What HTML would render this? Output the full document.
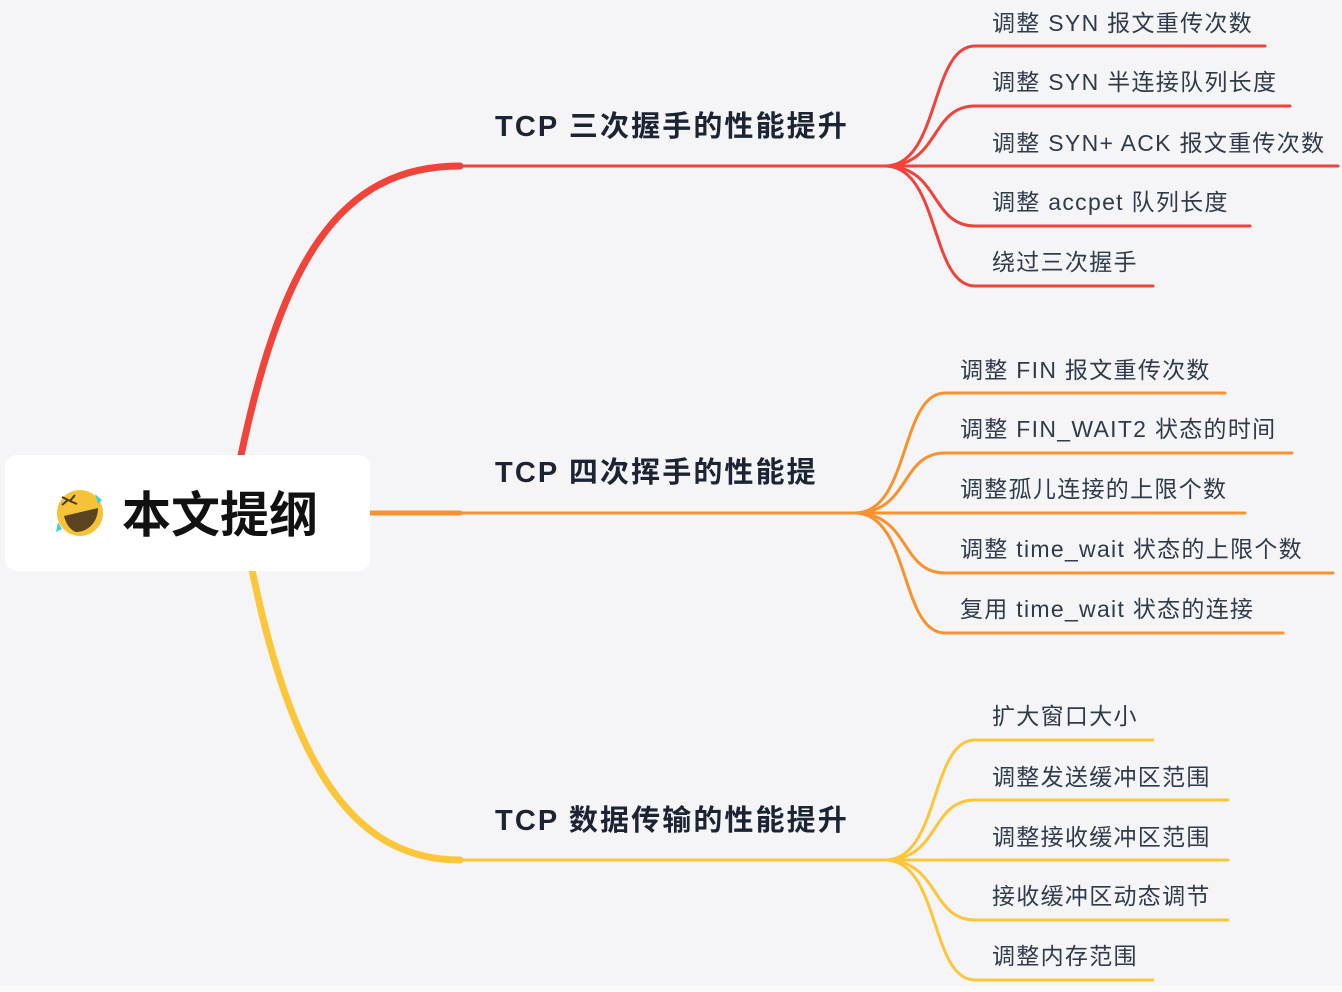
<!DOCTYPE html>
<html><head><meta charset="utf-8"><style>
html,body{margin:0;padding:0;background:#f5f5f8;}
svg{display:block;}
text{font-family:"Liberation Sans","Noto Sans CJK SC",sans-serif;}
.t{font-size:23px;fill:#2f3a4a;letter-spacing:1.3px;}
.h{font-size:29px;font-weight:bold;fill:#1c2433;letter-spacing:2.1px;}
</style></head><body>
<svg width="1342" height="992" viewBox="0 0 1342 992" xmlns="http://www.w3.org/2000/svg">
<rect width="1342" height="992" fill="#f5f5f8"/>
<rect x="0" y="986" width="1342" height="6" fill="#fbfbfc"/>
<g fill="none" stroke-linecap="round">
<path d="M238,470 C280,260 340,166 460,166" stroke="#f0433a" stroke-width="7"/>
<path d="M460,166 L890,166" stroke="#f0433a" stroke-width="3"/>
<path d="M370,513 L460,513" stroke="#f7922e" stroke-width="5"/>
<path d="M460,513 L860,513" stroke="#f7922e" stroke-width="3"/>
<path d="M250,560 C290,760 350,860 460,860" stroke="#fcc63a" stroke-width="7"/>
<path d="M460,860 L890,860" stroke="#fcc63a" stroke-width="3"/>
<g stroke="#f0433a" stroke-width="3">
<path d="M885,166 C940,166 930,46 975,46 L1265,46"/>
<path d="M885,166 C940,166 930,106 975,106 L1290,106"/>
<path d="M885,166 L1338,166"/>
<path d="M885,166 C940,166 930,226 975,226 L1250,226"/>
<path d="M885,166 C940,166 930,286 975,286 L1153,286"/>
</g>
<g stroke="#f7922e" stroke-width="3">
<path d="M855,513 C910,513 900,393 945,393 L1225,393"/>
<path d="M855,513 C910,513 900,453 945,453 L1292,453"/>
<path d="M855,513 L1245,513"/>
<path d="M855,513 C910,513 900,573 945,573 L1333,573"/>
<path d="M855,513 C910,513 900,633 945,633 L1283,633"/>
</g>
<g stroke="#fcc63a" stroke-width="3">
<path d="M885,860 C940,860 930,740 975,740 L1153,740"/>
<path d="M885,860 C940,860 930,800 975,800 L1228,800"/>
<path d="M885,860 L1228,860"/>
<path d="M885,860 C940,860 930,920 975,920 L1228,920"/>
<path d="M885,860 C940,860 930,980 975,980 L1153,980"/>
</g>
</g>
<rect x="5" y="455" width="365" height="116" rx="12" fill="#fff"/>
<circle cx="80" cy="513" r="23" fill="#f6c338"/>
<path d="M64,516 L98,508 C98,522 88,532 76,532 C70,530 66,524 64,516Z" fill="#5a4320"/>
<path d="M62,505 l6,-5 l-6,-3 M75,495 l-5,6 l7,3" stroke="#4a3a1c" stroke-width="2" fill="none"/>
<path d="M95,494 l7,6 l-4,4z M58,522 l-2,10 l6,-3z" fill="#3fd0d4"/>
<text x="122" y="532" style="font-size:49px;font-weight:bold;fill:#111;">本文提纲</text>
<text class="h" x="495" y="136">TCP 三次握手的性能提升</text>
<text class="h" x="495" y="482">TCP 四次挥手的性能提</text>
<text class="h" x="495" y="830">TCP 数据传输的性能提升</text>
<text class="t" x="992" y="31">调整 SYN 报文重传次数</text>
<text class="t" x="992" y="90">调整 SYN 半连接队列长度</text>
<text class="t" x="992" y="151">调整 SYN+ ACK 报文重传次数</text>
<text class="t" x="992" y="210">调整 accpet 队列长度</text>
<text class="t" x="992" y="270">绕过三次握手</text>
<text class="t" x="960" y="378">调整 FIN 报文重传次数</text>
<text class="t" x="960" y="437">调整 FIN_WAIT2 状态的时间</text>
<text class="t" x="960" y="497">调整孤儿连接的上限个数</text>
<text class="t" x="960" y="557">调整 time_wait 状态的上限个数</text>
<text class="t" x="960" y="617">复用 time_wait 状态的连接</text>
<text class="t" x="992" y="724">扩大窗口大小</text>
<text class="t" x="992" y="785">调整发送缓冲区范围</text>
<text class="t" x="992" y="845">调整接收缓冲区范围</text>
<text class="t" x="992" y="904">接收缓冲区动态调节</text>
<text class="t" x="992" y="964">调整内存范围</text>
</svg>
</body></html>
